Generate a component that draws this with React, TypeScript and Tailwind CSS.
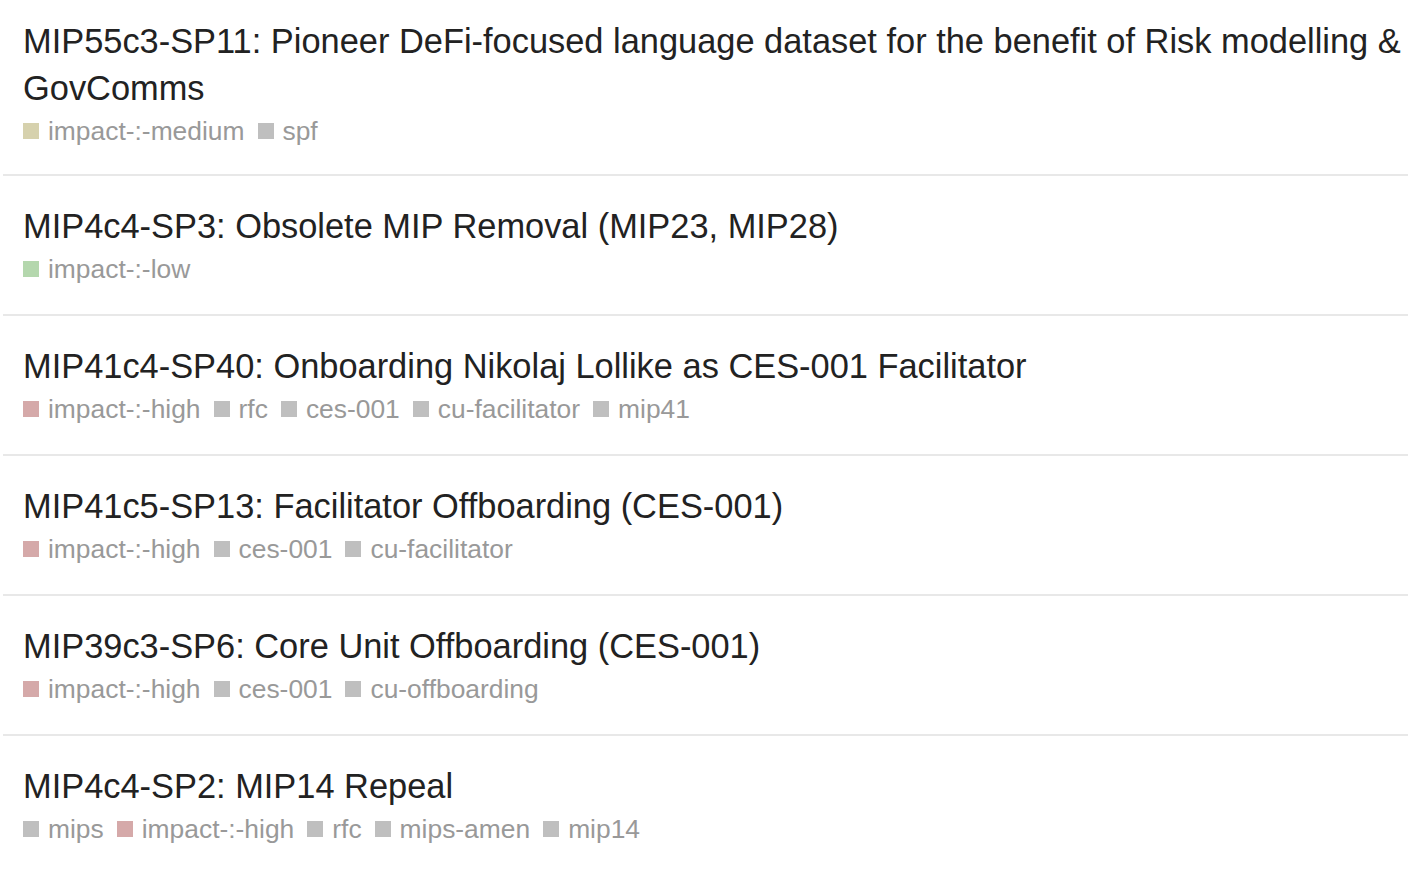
import React from "react";

type Tag = { label: string; color: string };

const MED = "bg-[#d6d1ad]";
const LOW = "bg-[#b4d7ad]";
const HIGH = "bg-[#d5a9a9]";
const GRAY = "bg-[#bfbfbf]";

const items: { title: string; tags: Tag[] }[] = [
  {
    title:
      "MIP55c3-SP11: Pioneer DeFi-focused language dataset for the benefit of Risk modelling & GovComms",
    tags: [
      { label: "impact-:-medium", color: MED },
      { label: "spf", color: GRAY },
    ],
  },
  {
    title: "MIP4c4-SP3: Obsolete MIP Removal (MIP23, MIP28)",
    tags: [{ label: "impact-:-low", color: LOW }],
  },
  {
    title: "MIP41c4-SP40: Onboarding Nikolaj Lollike as CES-001 Facilitator",
    tags: [
      { label: "impact-:-high", color: HIGH },
      { label: "rfc", color: GRAY },
      { label: "ces-001", color: GRAY },
      { label: "cu-facilitator", color: GRAY },
      { label: "mip41", color: GRAY },
    ],
  },
  {
    title: "MIP41c5-SP13: Facilitator Offboarding (CES-001)",
    tags: [
      { label: "impact-:-high", color: HIGH },
      { label: "ces-001", color: GRAY },
      { label: "cu-facilitator", color: GRAY },
    ],
  },
  {
    title: "MIP39c3-SP6: Core Unit Offboarding (CES-001)",
    tags: [
      { label: "impact-:-high", color: HIGH },
      { label: "ces-001", color: GRAY },
      { label: "cu-offboarding", color: GRAY },
    ],
  },
  {
    title: "MIP4c4-SP2: MIP14 Repeal",
    tags: [
      { label: "mips", color: GRAY },
      { label: "impact-:-high", color: HIGH },
      { label: "rfc", color: GRAY },
      { label: "mips-amen", color: GRAY },
      { label: "mip14", color: GRAY },
    ],
  },
];

export default function App() {
  return (
    <div className="w-[1408px] h-[872px] overflow-hidden bg-white font-['Liberation_Sans',Arial,sans-serif]">
      <div className="ml-[3px]">
        {items.map((it, i) => (
          <div
            key={i}
            className={
              (i === 0 ? "pt-[18px] pb-[25px] " : "pt-[27px] pb-[27px] ") +
              "pl-[20px] border-b-2 border-[#e8e8e8]"
            }
          >
            <div className="text-[34.4px] leading-[47px] text-[#222222]">
              {it.title}
            </div>
            <div className="flex items-center mt-[1px] h-[36px] gap-[13px] text-[26.4px] leading-[36px] text-[#999999]">
              {it.tags.map((t, j) => (
                <span key={j} className="flex items-center gap-[9px]">
                  <span className={"inline-block w-[16px] h-[16px] " + t.color} />
                  <span>{t.label}</span>
                </span>
              ))}
            </div>
          </div>
        ))}
      </div>
    </div>
  );
}
